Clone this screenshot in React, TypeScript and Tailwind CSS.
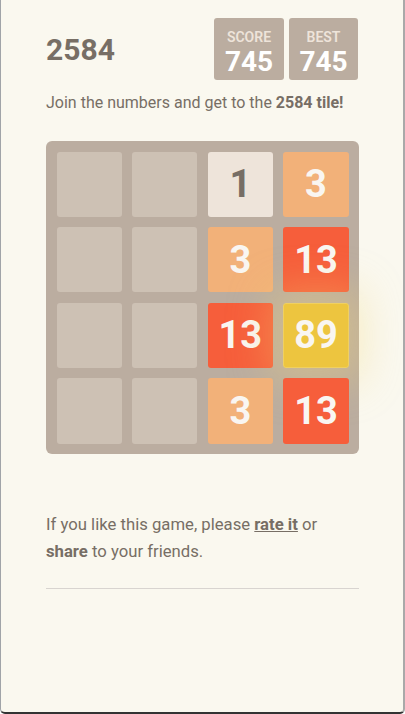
const font = { fontFamily: "Roboto, 'Noto Sans', sans-serif" };

type Tile = { v: number | null };

const rows: (number | null)[][] = [
  [null, null, 1, 3],
  [null, null, 3, 13],
  [null, null, 13, 89],
  [null, null, 3, 13],
];

function tileClass(v: number) {
  if (v === 1) return "bg-[#eee4da] text-[#776e65]";
  if (v === 3) return "bg-[#f2b179] text-[#f9f6f2]";
  if (v === 13) return "bg-[#f65e3b] text-[#f9f6f2]";
  return "bg-[#edc53f] text-[#f9f6f2] shadow-[0_0_40px_14px_rgba(243,215,116,0.35)] border border-[#f0d060]";
}

function Cell({ v }: Tile) {
  if (v === null) return <div className="aspect-square rounded-[3px] bg-[#cdc1b4]" />;
  return (
    <div
      className={`aspect-square rounded-[3px] flex items-center justify-center text-[38px] font-bold leading-none ${tileClass(v)}`}
    >
      {v}
    </div>
  );
}

export default function App() {
  return (
    <div
      className="h-[714px] w-[405px] bg-[#faf8ef] text-[#776e65] border-l border-l-[#a0a4a8] border-r-2 border-r-[#a9a9a9] border-b-2 border-b-[#333] rounded-b-[5px] overflow-hidden"
      style={font}
    >
      <div className="px-[45px] pt-[18px]">
        {/* Header */}
        <div className="flex items-center justify-between">
          <h1 className="text-[30px] font-bold leading-none mt-[2px]">2584</h1>
          <div className="flex gap-[5px]">
            <div className="w-[70px] h-[62px] rounded-[3px] bg-[#bbada0] flex flex-col items-center pt-[12px]">
              <span className="text-[14px] font-semibold leading-none text-[#eee4da]">SCORE</span>
              <span className="text-[28px] font-bold leading-none text-white mt-[4px]">745</span>
            </div>
            <div className="w-[69px] h-[62px] rounded-[3px] bg-[#bbada0] flex flex-col items-center pt-[12px]">
              <span className="text-[14px] font-semibold leading-none text-[#eee4da]">BEST</span>
              <span className="text-[28px] font-bold leading-none text-white mt-[4px]">745</span>
            </div>
          </div>
        </div>

        {/* Intro */}
        <p className="mt-[13px] text-[16px] leading-[20px] whitespace-nowrap">
          Join the numbers and get to the <strong className="font-bold">2584 tile!</strong>
        </p>

        {/* Board */}
        <div className="mt-[28px] w-[313px] rounded-[6px] bg-[#bbada0] p-[10.5px] grid grid-cols-4 gap-[10.5px]">
          {rows.flat().map((v, i) => (
            <Cell key={i} v={v} />
          ))}
        </div>

        {/* Footer */}
        <p className="mt-[57px] text-[16.7px] leading-[27px]">
          If you like this game, please{" "}
          <a className="font-bold underline">rate it</a> or
          <br />
          <strong className="font-bold">share</strong> to your friends.
        </p>
        <hr className="mt-[23px] w-[313px] border-t border-[#d8d4d0]" />
      </div>
    </div>
  );
}
